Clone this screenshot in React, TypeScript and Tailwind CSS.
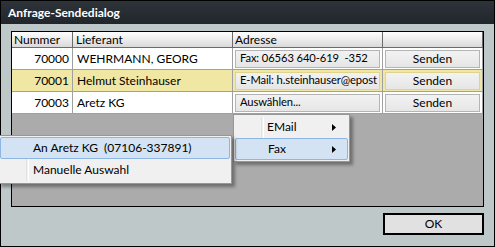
const rows = [
  { nr: "70000", name: "WEHRMANN, GEORG", addr: "Fax: 06563 640-619  -352", hi: false },
  { nr: "70001", name: "Helmut Steinhauser", addr: "E-Mail: h.steinhauser@epost", hi: true },
  { nr: "70003", name: "Aretz KG", addr: "Auswählen...", hi: false },
]

function Arrow() {
  return (
    <svg width="4" height="7" viewBox="0 0 4 7" className="shrink-0">
      <path d="M0 0 L4 3.5 L0 7 Z" fill="#000" />
    </svg>
  )
}

function CellButton({ children, hi, center }: { children: React.ReactNode; hi: boolean; center?: boolean }) {
  return (
    <div
      className={`mx-[2px] h-[18px] flex items-center overflow-hidden whitespace-pre border bg-gradient-to-b from-[#f2f2f2] to-[#e6e6e6] ${
        hi ? "border-[#e0d48a]" : "border-[#b4b4b4]"
      } ${center ? "justify-center" : "pl-[4px] text-[11.2px] tracking-[-0.1px]"}`}
    >
      {children}
    </div>
  )
}

export default function App() {
  return (
    <div className="relative w-[495px] h-[247px] overflow-hidden font-['Lato','Liberation_Sans',sans-serif] text-[12px] text-black">
      {/* Window */}
      <div className="w-full h-full border border-black flex flex-col bg-[#bec8c8]">
        <div className="h-[23px] shrink-0 bg-gradient-to-b from-[#2d343a] to-[#21262b] px-[7px] flex items-center text-white font-bold text-[12px]">
          Anfrage-Sendedialog
        </div>

        <div className="flex-1 flex flex-col px-[10px] pt-[7px]">
          {/* Grid */}
          <div className="w-[473px] h-[176px] border border-black bg-[#ababab]">
            <div className="grid grid-cols-[61px_160px_150px_100px] h-[16px] bg-gradient-to-b from-[#ffffff] to-[#d9d9d9] border-b border-[#6b6b6b]">
              <div className="pl-[2px] leading-[15px] border-r border-[#6b6b6b]">Nummer</div>
              <div className="pl-[3px] leading-[15px] border-r border-[#6b6b6b]">Lieferant</div>
              <div className="pl-[2px] leading-[15px] border-r border-[#6b6b6b]">Adresse</div>
              <div className="border-r border-[#6b6b6b]" />
            </div>
            {rows.map((r) => (
              <div
                key={r.nr}
                className={`grid grid-cols-[61px_160px_150px_100px] h-[22px] border-b border-[#a0a0a0] ${
                  r.hi ? "bg-[#f0e7a4]" : "bg-white"
                }`}
              >
                <div className="flex items-center justify-end pr-[3px] border-r border-[#a0a0a0]">{r.nr}</div>
                <div className="flex items-center pl-[4px] border-r border-[#a0a0a0]">{r.name}</div>
                <div className="flex items-center border-r border-[#a0a0a0]">
                  <div className="w-full">
                    <CellButton hi={r.hi}>{r.addr}</CellButton>
                  </div>
                </div>
                <div className="flex items-center border-r border-[#a0a0a0]">
                  <div className="w-full">
                    <CellButton hi={r.hi} center>
                      Senden
                    </CellButton>
                  </div>
                </div>
              </div>
            ))}
          </div>

          {/* Buttons */}
          <div className="flex justify-end mt-[6px]">
            <button className="w-[101px] h-[22px] border-2 border-black bg-[#e1e1e1] flex items-center justify-center">
              OK
            </button>
          </div>
        </div>
      </div>

      {/* Context menu: EMail / Fax */}
      <div className="absolute left-[233px] top-[114px] w-[117px] h-[48px] bg-[#f0f0f0] border border-[#979797] shadow-[3px_3px_3px_rgba(0,0,0,0.35)] py-[1px]">
        <div className="absolute left-[27px] top-[2px] bottom-[2px] w-[2px] border-l border-[#e2e3e3] shadow-[1px_0_0_#ffffff]" />
        <div className="relative h-[22px] mx-[1px] flex items-center pl-[32px] pr-[12px]">
          <span className="flex-1">EMail</span>
          <Arrow />
        </div>
        <div className="relative h-[22px] mx-[1px] flex items-center pl-[32px] pr-[11px] bg-[#d3e3f3] border border-[#8db6e4] rounded-[2px]">
          <span className="flex-1">Fax</span>
          <Arrow />
        </div>
      </div>

      {/* Submenu: Fax targets */}
      <div className="absolute left-[-2px] top-[135px] w-[234px] h-[49px] bg-[#f0f0f0] border border-[#979797] shadow-[3px_3px_3px_rgba(0,0,0,0.35)] py-[1px]">
        <div className="absolute left-[27px] top-[2px] bottom-[2px] w-[2px] border-l border-[#e2e3e3] shadow-[1px_0_0_#ffffff]" />
        <div className="relative h-[22px] mx-[1px] flex items-center pl-[32px] bg-[#d3e3f3] border border-[#8db6e4] rounded-[2px] whitespace-pre">
          An Aretz KG  (07106-337891)
        </div>
        <div className="relative h-[22px] mx-[1px] flex items-center pl-[33px]">Manuelle Auswahl</div>
      </div>
    </div>
  )
}
